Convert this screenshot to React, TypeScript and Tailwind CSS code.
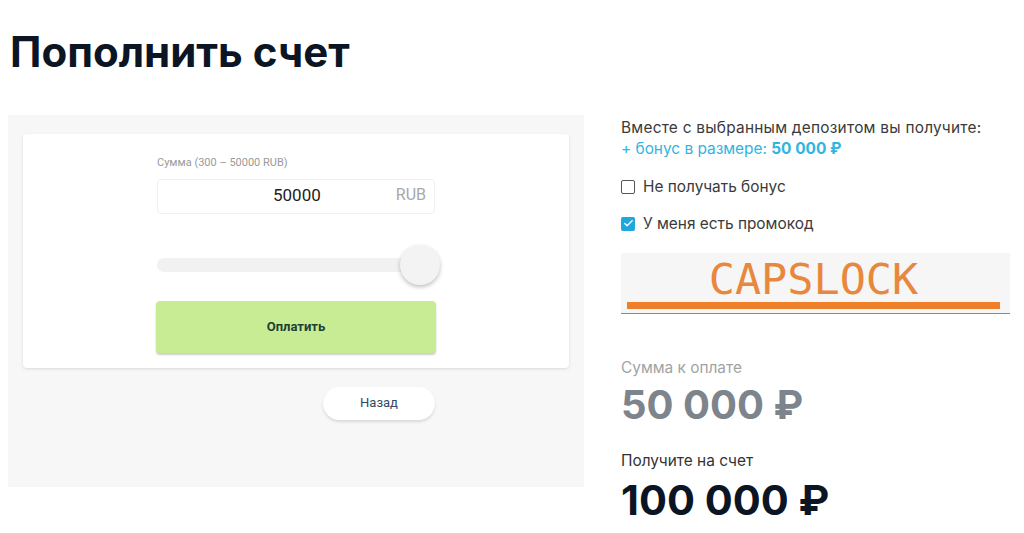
import { Check } from "lucide-react";

export default function App() {
  return (
    <div className="min-h-screen bg-white font-['Inter',sans-serif] text-[#0b1524]">
      <div className="px-2 pt-[26px]">
        <h1 className="pl-[2px] text-[42px] font-bold leading-[52px] text-[#0b1524]">
          Пополнить счет
        </h1>

        <div className="mt-[37px] flex gap-[37px]">
          {/* Left: payment form */}
          <div className="flex h-[372px] w-[576px] flex-col items-center bg-[#f7f7f7] px-[15px] pt-[19px]">
            <div className="flex w-full flex-col items-center rounded bg-white pb-[15px] pt-[21px] shadow-[0_1px_3px_rgba(0,0,0,0.12)]">
              <div className="w-[278px] font-['Roboto',sans-serif]">
                <div className="text-[11px] text-[#9a9a9a]">Сумма (300 – 50000 RUB)</div>
                <div className="mt-[7px] flex h-[35px] items-center rounded border border-[#f0f0f0] bg-white pr-[8px]">
                  <span className="flex-1 pl-[40px] text-center text-[17px] text-[#222]">50000</span>
                  <span className="-translate-y-[1px] text-[16px] text-[#a8a8a8]">RUB</span>
                </div>

                <div className="relative mt-[44px] h-[14px] rounded-full bg-[#f1f1f1]">
                  <div className="absolute left-[243px] top-[-13px] h-[40px] w-[40px] rounded-full bg-[#f3f3f3] shadow-[0_2px_4px_rgba(0,0,0,0.25)]" />
                </div>

                <button className="mt-[29px] flex h-[52px] w-[280px] -translate-x-[1px] items-center justify-center rounded bg-[#c8ec94] text-[13px] font-bold text-[#1d4035] shadow-[0_2px_2px_rgba(0,0,0,0.2)]">
                  Оплатить
                </button>
              </div>
            </div>

            <div className="flex w-[278px] justify-end">
              <button className="mt-[19px] h-[33px] w-[112px] rounded-full bg-white font-['Roboto',sans-serif] text-[13px] text-[#2e4a66] shadow-[0_2px_3px_rgba(0,0,0,0.12)]">
                Назад
              </button>
            </div>
          </div>

          {/* Right: bonus summary */}
          <div className="w-[389px] pt-[2px] text-[15.4px]">
            <p className="leading-[21px] tracking-[0.25px] text-[#3a3a3a]">
              Вместе с выбранным депозитом вы получите:
            </p>
            <p className="leading-[21px] text-[#2fb5e0]">
              + бонус в размере: <span className="font-bold">50 000 ₽</span>
            </p>

            <label className="mt-[16px] flex items-center gap-[8px] text-[#3a3a3a]">
              <span className="h-[14px] w-[14px] rounded-[2px] border-[1.5px] border-[#555]" />
              Не получать бонус
            </label>
            <label className="mt-[14px] flex items-center gap-[8px] text-[#3a3a3a]">
              <span className="flex h-[14px] w-[14px] items-center justify-center rounded-[2px] bg-[#1fa7de]">
                <Check className="h-[11px] w-[11px] text-white" strokeWidth={3} />
              </span>
              У меня есть промокод
            </label>

            <div className="mt-[18px] flex h-[61px] flex-col border-b border-[#8a8a8a] bg-[#f6f6f6]">
              <div className="flex h-[48px] items-end justify-center pr-[4px] font-['DejaVu_Sans_Mono',monospace] text-[43.5px] leading-[44px] text-[#e8883d]">
                CAPSLOCK
              </div>
              <div className="ml-[6px] mr-[10px] mt-[1px] h-[7px] bg-[#f07f2a]" />
            </div>

            <div className="mt-[44px] leading-[20px] text-[#a3a3a3]">Сумма к оплате</div>
            <div className="mt-[3px] text-[40px] font-bold leading-[48px] text-[#7d848b]">50 000 ₽</div>

            <div className="mt-[22px] leading-[20px] text-[#333]">Получите на счет</div>
            <div className="mt-[5px] text-[41.5px] font-bold leading-[48px] text-[#0b1524]">100 000 ₽</div>
          </div>
        </div>
      </div>
    </div>
  );
}
